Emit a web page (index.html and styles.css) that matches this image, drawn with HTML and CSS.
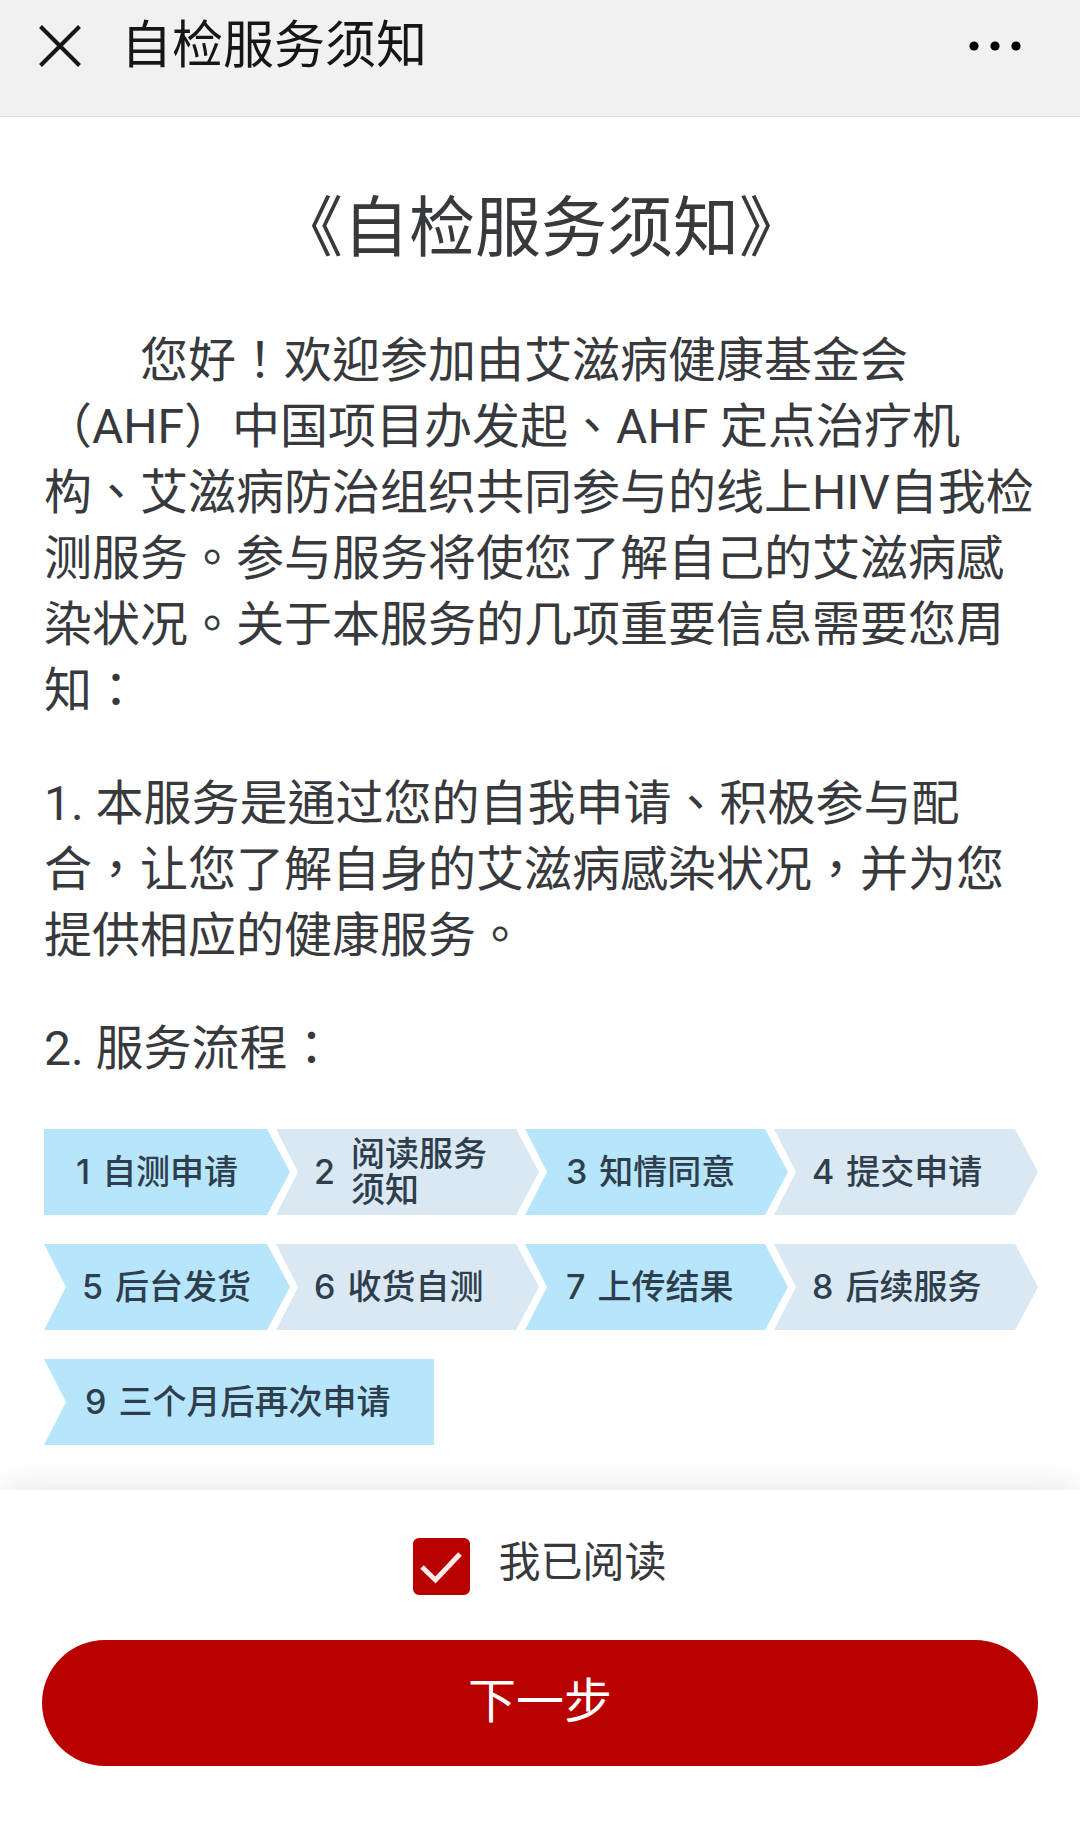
FILE: index.html
```html
<!DOCTYPE html>
<html lang="zh-TW">
<head>
  <meta charset="utf-8">
  <meta name="viewport" content="width=device-width, initial-scale=1">
  <title>自检服务须知</title>
  <link rel="stylesheet" href="styles.css">
</head>
<body class="page">
  <header class="topbar">
    <button class="icon-button" type="button" aria-label="关闭">
      <svg class="icon-close" viewBox="0 0 42 42" aria-hidden="true"><path d="M1.500 1.500 40.500 40.500M40.500 1.500 1.500 40.500"/></svg>
    </button>
    <h1 class="topbar-title">自检服务须知</h1>
    <button class="icon-button" type="button" aria-label="更多">
      <svg class="icon-more" viewBox="0 0 52 10" aria-hidden="true"><circle cx="5" cy="5" r="4.600"/><circle cx="26" cy="5" r="4.600"/><circle cx="47" cy="5" r="4.600"/></svg>
    </button>
  </header>

  <main class="content">
    <h2 class="title">《自检服务须知》</h2>
    <p class="intro">您好！欢迎参加由艾滋病健康基金会（AHF）中国项目办发起、AHF 定点治疗机构、艾滋病防治组织共同参与的线上HIV自我检测服务。参与服务将使您了解自己的艾滋病感染状况。关于本服务的几项重要信息需要您周知：</p>
    <p>1. 本服务是通过您的自我申请、积极参与配合，让您了解自身的艾滋病感染状况，并为您提供相应的健康服务。</p>
    <p>2. 服务流程：</p>
    <ol class="flow" lang="zh-CN">
      <li class="step step-first"><span>1</span><span>自测申请</span></li>
      <li class="step step-pale step-two-line"><span>2</span><span>阅读服务<br>须知</span></li>
      <li class="step step-mid"><span>3</span><span>知情同意</span></li>
      <li class="step step-pale step-end"><span>4</span><span>提交申请</span></li>
      <li class="step"><span>5</span><span>后台发货</span></li>
      <li class="step step-pale"><span>6</span><span>收货自测</span></li>
      <li class="step step-mid"><span>7</span><span>上传结果</span></li>
      <li class="step step-pale step-end"><span>8</span><span>后续服务</span></li>
      <li class="step step-last"><span>9</span><span>三个月后再次申请</span></li>
    </ol>
  </main>

  <footer class="actions">
    <label class="agree">
      <span class="checkbox">
        <input class="checkbox-input" type="checkbox" checked>
        <svg class="checkbox-mark" viewBox="0 0 57 57" aria-hidden="true"><path d="M9 29 22.500 42 47 16"/></svg>
      </span>
      <span class="agree-text">我已阅读</span>
    </label>
    <button class="next" type="button">下一步</button>
  </footer>
</body>
</html>
```

FILE: styles.css
```css
* {
  box-sizing: border-box;
}

.page {
  display: flex;
  flex-direction: column;
  min-height: 100vh;
  margin: 0;
  background: #fff;
  color: #37393d;
  font-family: Roboto, "Noto Sans CJK TC", sans-serif;
  font-size: 48px;
  line-height: 66px;
}

.topbar {
  display: flex;
  align-items: center;
  gap: 40px;
  padding: 13px 59px 37px 39px;
  border-bottom: 1px solid #dfdfdf;
  background: #f1f1f1;
  color: #161616;
}

.topbar-title {
  flex: 1;
  margin: 0;
  font-size: 51px;
  font-weight: 400;
}

.icon-button {
  display: flex;
  padding: 0;
  border: 0;
  background: none;
  color: inherit;
}

.icon-close {
  width: 42px;
  height: 42px;
  fill: none;
  stroke: currentColor;
  stroke-width: 4;
}

.icon-more {
  width: 52px;
  height: 10px;
  fill: #000;
}

.content {
  flex: 1;
  padding: 68px 42px 44px 44px;
}

.content p {
  margin: 0 0 47px;
}

.title {
  margin: 0 0 55px;
  font-size: 66px;
  font-weight: 400;
  line-height: 88px;
  text-align: center;
}

.content .intro {
  text-indent: 2em;
}

.flow {
  display: grid;
  grid-template-columns: 232fr 249fr 249fr 264fr;
  row-gap: 29px;
  margin: 0;
  padding: 0;
  list-style: none;
  color: #2e3e4d;
  font-family: Inter, "Noto Sans CJK SC", sans-serif;
  font-size: 34px;
  font-weight: 500;
  line-height: 36px;
}

/* Arrow-shaped steps; each reaches into the notch of the next one. */
.step {
  display: flex;
  align-items: center;
  gap: 12px;
  height: 86px;
  margin-right: -14px;
  padding-left: 38px;
  background: #b7e5fb;
  clip-path: polygon(0 0, calc(100% - 23px) 0, 100% 50%, calc(100% - 23px) 100%, 0 100%, 22px 50%);
  white-space: nowrap;
}

.step-first {
  padding-left: 32px;
  clip-path: polygon(0 0, calc(100% - 23px) 0, 100% 50%, calc(100% - 23px) 100%, 0 100%);
}

.step-pale {
  background: #d9e8f2;
}

.step-two-line {
  gap: 16px;
}

.step-mid {
  padding-left: 41px;
}

.step-end {
  margin-right: 0;
}

.step-last {
  grid-column: span 2;
  justify-self: start;
  padding: 0 44px 0 41px;
  clip-path: polygon(0 0, 100% 0, 100% 100%, 0 100%, 22px 50%);
}

.actions {
  padding: 48px 42px 60px;
  background: #fff;
  box-shadow: 0 -4px 36px -4px rgba(0, 0, 0, 0.12);
}

.agree {
  display: flex;
  justify-content: center;
  gap: 28px;
  margin-bottom: 45px;
}

.checkbox {
  display: grid;
  width: 57px;
  height: 57px;
}

.checkbox-input,
.checkbox-mark {
  grid-area: 1 / 1;
  width: 100%;
  height: 100%;
  margin: 0;
}

.checkbox-input {
  appearance: none;
  border: 2px solid #b80000;
  border-radius: 6px;
}

.checkbox-input:checked {
  background: #b80000;
}

.checkbox-mark {
  visibility: hidden;
  fill: none;
  stroke: #ffe9e9;
  stroke-width: 5;
  pointer-events: none;
}

.checkbox-input:checked + .checkbox-mark {
  visibility: visible;
}

.agree-text {
  font-size: 42px;
  line-height: 50px;
}

.next {
  display: block;
  width: 100%;
  height: 126px;
  padding: 0 0 2px;
  border: 0;
  border-radius: 63px;
  background: #b80000;
  color: #fff;
  font: inherit;
}
```
